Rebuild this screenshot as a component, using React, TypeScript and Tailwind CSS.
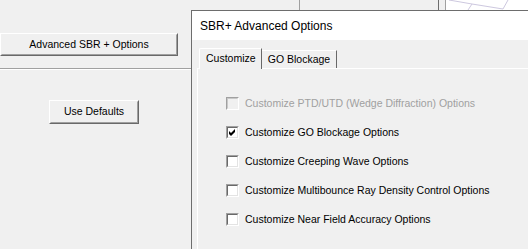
import type { ReactNode } from "react";

const OPTIONS = [
  { label: "Customize PTD/UTD (Wedge Diffraction) Options", checked: false, disabled: true },
  { label: "Customize GO Blockage Options", checked: true, disabled: false },
  { label: "Customize Creeping Wave Options", checked: false, disabled: false },
  { label: "Customize Multibounce Ray Density Control Options", checked: false, disabled: false },
  { label: "Customize Near Field Accuracy Options", checked: false, disabled: false },
];

function ClassicButton({ className, children }: { className: string; children: ReactNode }) {
  return (
    <div
      className={`border border-t-white border-l-white border-r-[#696969] border-b-[#696969] ${className}`}
    >
      <div className="flex h-full w-full items-center justify-center border border-t-[#f0f0f0] border-l-[#f0f0f0] border-r-[#a0a0a0] border-b-[#a0a0a0] bg-[#f0f0f0]">
        {children}
      </div>
    </div>
  );
}

function Checkbox({ checked, disabled }: { checked: boolean; disabled: boolean }) {
  return (
    <div className="h-[13px] w-[13px] shrink-0 border border-t-[#a0a0a0] border-l-[#a0a0a0] border-r-white border-b-white">
      <div
        className={`flex h-full w-full items-center justify-center border ${
          disabled
            ? "border-t-[#c8c8c8] border-l-[#c8c8c8] border-r-[#f0f0f0] border-b-[#f0f0f0] bg-[#f0f0f0]"
            : "border-t-[#696969] border-l-[#696969] border-r-[#e3e3e3] border-b-[#e3e3e3] bg-white"
        }`}
      >
        {checked && (
          <svg width="9" height="9" viewBox="0 0 9 9">
            <polygon points="1,3 3,5 7,1 7,4 3,8 1,6" fill="#000" />
          </svg>
        )}
      </div>
    </div>
  );
}

export default function App() {
  return (
    <div className="flex h-[249px] w-[528px] overflow-hidden bg-[#f0f0f0] font-['Liberation_Sans',Arial,sans-serif] text-[10.5px] text-black">
      {/* host window, left panel */}
      <aside className="flex w-[191px] shrink-0 flex-col pt-[33px]">
        <ClassicButton className="h-[23px] w-[178px]">Advanced SBR + Options</ClassicButton>
        <div className="mt-[12px] h-[2px] border-t border-b border-t-[#a0a0a0] border-b-white" />
        <ClassicButton className="ml-[49px] mt-[30px] h-[24px] w-[90px]">Use Defaults</ClassicButton>
      </aside>

      <section className="flex min-w-0 flex-1 flex-col">
        {/* host window behind the dialog */}
        <div className="flex h-[10px] shrink-0">
          <div className="w-[109px] border-r border-[#a0a0a0]" />
          <div className="w-[139px] border-r border-[#6d6d6d]" />
          <div className="w-[7px] border-r border-[#a0a0a0]" />
          <div className="flex-1 bg-white">
            <svg width="82" height="10" viewBox="0 0 82 10">
              <g stroke="#cdc8df" strokeWidth="1" fill="none">
                <polyline points="3,0 26,4 57,9" />
                <line x1="26" y1="4" x2="22" y2="10" />
                <line x1="57" y1="9" x2="62" y2="0" />
              </g>
            </svg>
          </div>
        </div>

        {/* dialog */}
        <div className="flex flex-1 flex-col border-l border-t border-[#6d6d6d] bg-[#f0f0f0]">
          <div className="flex h-[29px] shrink-0 items-center bg-white pl-[8px] text-[12px]">
            SBR+ Advanced Options
          </div>
          <div className="flex flex-1 flex-col pl-[5px] pt-[8px]">
            <div className="flex h-[20px] items-end pl-[2px]">
              <div className="relative z-10 -mb-px flex h-[21px] w-[63px] items-center rounded-tl-[2px] border-l border-t border-r border-l-white border-t-white border-r-[#696969] bg-[#f0f0f0] pb-[1px] pl-[6px]">
                Customize
              </div>
              <div className="flex h-[18px] w-[75px] items-center justify-center border-t border-r border-t-white border-r-[#696969] pt-[1px]">
                GO Blockage
              </div>
            </div>
            <div className="flex flex-1 flex-col gap-[16px] border-l border-t border-white pl-[28px] pt-[28px]">
              {OPTIONS.map((o) => (
                <div key={o.label} className="flex h-[13px] items-center gap-[6px]">
                  <Checkbox checked={o.checked} disabled={o.disabled} />
                  <span className={`leading-none ${o.disabled ? "text-[#a0a0a0]" : ""}`}>{o.label}</span>
                </div>
              ))}
            </div>
          </div>
        </div>
      </section>
    </div>
  );
}
